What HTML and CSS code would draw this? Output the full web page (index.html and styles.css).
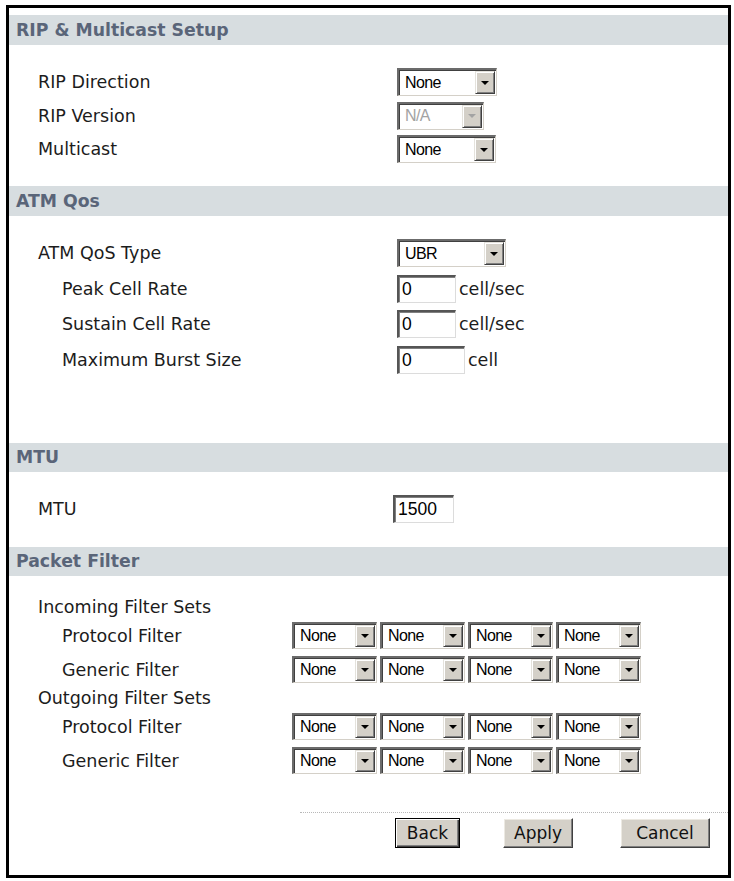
FILE: index.html
```html
<!DOCTYPE html>
<html lang="en">
<head>
<meta charset="utf-8">
<title>WAN Advanced Setup</title>
<link rel="stylesheet" href="styles.css">
</head>
<body>
<div class="frame">

  <div class="sec-head">RIP &amp; Multicast Setup</div>
  <div class="sec-body sb-rip">
    <div class="row r-rip">
      <span class="lbl l1">RIP Direction</span>
      <div class="sel w100"><span class="sel-text">None</span><span class="sel-btn"><i class="tri"></i></span></div>
    </div>
    <div class="row r-rip">
      <span class="lbl l1">RIP Version</span>
      <div class="sel w87 disabled"><span class="sel-text">N/A</span><span class="sel-btn"><i class="tri"></i></span></div>
    </div>
    <div class="row r-rip">
      <span class="lbl l1">Multicast</span>
      <div class="sel w99"><span class="sel-text">None</span><span class="sel-btn"><i class="tri"></i></span></div>
    </div>
  </div>

  <div class="sec-head">ATM Qos</div>
  <div class="sec-body sb-atm">
    <div class="row r-atm">
      <span class="lbl l1">ATM QoS Type</span>
      <div class="sel w109"><span class="sel-text">UBR</span><span class="sel-btn"><i class="tri"></i></span></div>
    </div>
    <div class="row r-atm">
      <span class="lbl l2">Peak Cell Rate</span>
      <div class="ctl"><input class="inp w59" type="text" value="0"><span class="unit">cell/sec</span></div>
    </div>
    <div class="row r-atm">
      <span class="lbl l2">Sustain Cell Rate</span>
      <div class="ctl"><input class="inp w59" type="text" value="0"><span class="unit">cell/sec</span></div>
    </div>
    <div class="row r-atm">
      <span class="lbl l2">Maximum Burst Size</span>
      <div class="ctl"><input class="inp w68" type="text" value="0"><span class="unit">cell</span></div>
    </div>
  </div>

  <div class="sec-head sh-short">MTU</div>
  <div class="sec-body sb-mtu">
    <div class="row r-mtu">
      <span class="lbl l1">MTU</span>
      <div class="ctl ctl-mtu"><input class="inp w61" type="text" value="1500"></div>
    </div>
  </div>

  <div class="sec-head sh-short">Packet Filter</div>
  <div class="sec-body sb-pf">
    <div class="trow"><span class="lbl l1">Incoming Filter Sets</span></div>
    <div class="frow">
      <span class="lbl l2">Protocol Filter</span>
      <div class="fgroup">
        <div class="sel w85"><span class="sel-text">None</span><span class="sel-btn"><i class="tri"></i></span></div>
        <div class="sel w85"><span class="sel-text">None</span><span class="sel-btn"><i class="tri"></i></span></div>
        <div class="sel w85"><span class="sel-text">None</span><span class="sel-btn"><i class="tri"></i></span></div>
        <div class="sel w85"><span class="sel-text">None</span><span class="sel-btn"><i class="tri"></i></span></div>
      </div>
    </div>
    <div class="frow">
      <span class="lbl l2">Generic Filter</span>
      <div class="fgroup">
        <div class="sel w85"><span class="sel-text">None</span><span class="sel-btn"><i class="tri"></i></span></div>
        <div class="sel w85"><span class="sel-text">None</span><span class="sel-btn"><i class="tri"></i></span></div>
        <div class="sel w85"><span class="sel-text">None</span><span class="sel-btn"><i class="tri"></i></span></div>
        <div class="sel w85"><span class="sel-text">None</span><span class="sel-btn"><i class="tri"></i></span></div>
      </div>
    </div>
    <div class="trow"><span class="lbl l1">Outgoing Filter Sets</span></div>
    <div class="frow">
      <span class="lbl l2">Protocol Filter</span>
      <div class="fgroup">
        <div class="sel w85"><span class="sel-text">None</span><span class="sel-btn"><i class="tri"></i></span></div>
        <div class="sel w85"><span class="sel-text">None</span><span class="sel-btn"><i class="tri"></i></span></div>
        <div class="sel w85"><span class="sel-text">None</span><span class="sel-btn"><i class="tri"></i></span></div>
        <div class="sel w85"><span class="sel-text">None</span><span class="sel-btn"><i class="tri"></i></span></div>
      </div>
    </div>
    <div class="frow">
      <span class="lbl l2">Generic Filter</span>
      <div class="fgroup">
        <div class="sel w85"><span class="sel-text">None</span><span class="sel-btn"><i class="tri"></i></span></div>
        <div class="sel w85"><span class="sel-text">None</span><span class="sel-btn"><i class="tri"></i></span></div>
        <div class="sel w85"><span class="sel-text">None</span><span class="sel-btn"><i class="tri"></i></span></div>
        <div class="sel w85"><span class="sel-text">None</span><span class="sel-btn"><i class="tri"></i></span></div>
      </div>
    </div>
  </div>

  <div class="actions">
    <button class="btn btn-back default" type="button">Back</button>
    <button class="btn btn-apply" type="button">Apply</button>
    <button class="btn btn-cancel" type="button">Cancel</button>
  </div>

</div>
</body>
</html>
```
FILE: styles.css
```css
html, body {
  margin: 0;
  padding: 0;
  background: #ffffff;
}

body {
  font-family: "DejaVu Sans", Verdana, sans-serif;
  color: #1c1c1c;
}

.frame {
  box-sizing: border-box;
  width: 725px;
  height: 873px;
  margin: 5px 0 0 6px;
  border: 3px solid #000;
  padding-top: 7px;
  background: #fff;
}

/* Section header bars */
.sec-head {
  height: 30px;
  background: #d7dde0;
  color: #5a6579;
  font-weight: bold;
  font-size: 17.3px;
  line-height: 30px;
  padding-left: 7px;
  white-space: nowrap;
}
.sh-short {
  height: 29px;
  line-height: 29px;
}

/* Section bodies */
.sb-rip { padding: 20.25px 0; }
.sb-atm { padding: 19.25px 0 65.75px; }
.sb-mtu { padding: 19.5px 0 20.5px; }
.sb-pf  { padding: 19.5px 0 0; }

.row {
  display: grid;
  grid-template-columns: 388px auto;
  align-items: center;
}
.r-rip { height: 33.5px; }
.r-atm { height: 35.5px; }
.r-mtu { height: 35px; }

.trow {
  height: 23px;
  display: flex;
  align-items: center;
}
.frow {
  height: 34px;
  display: grid;
  grid-template-columns: 283px auto;
  align-items: center;
}

.lbl {
  font-size: 17.5px;
  white-space: nowrap;
  color: #1c1c1c;
}
.l1 { padding-left: 29px; }
.l2 { padding-left: 53px; }

.ctl {
  display: flex;
  align-items: center;
}
.ctl-mtu { margin-left: -4px; }

.unit {
  font-size: 17.5px;
  margin-left: 3px;
  color: #1c1c1c;
}

.fgroup {
  display: flex;
  gap: 3px;
}

/* Win-classic style select */
.sel {
  box-sizing: border-box;
  height: 28px;
  display: flex;
  align-items: stretch;
  background: #fff;
  border-style: solid;
  border-width: 2px 1px 1px 2px;
  border-color: #6b6b6b #d4d0c8 #d4d0c8 #6b6b6b;
  box-shadow: inset 1px 1px 0 #404040;
  padding: 1px;
}
.frow .sel { height: 27px; }

.sel-text {
  flex: 1;
  display: flex;
  align-items: center;
  padding-left: 5px;
  font-family: "Liberation Sans", Arial, sans-serif;
  font-size: 16px;
  letter-spacing: -0.6px;
  color: #000;
  overflow: hidden;
}
.sel-btn {
  box-sizing: border-box;
  width: 20px;
  background: #d4d0c8;
  border-style: solid;
  border-width: 1px;
  border-color: #e4e2dc #404040 #404040 #e4e2dc;
  box-shadow: inset 1px 1px 0 #ffffff, inset -1px -1px 0 #808080;
  display: flex;
  align-items: center;
  justify-content: center;
}
.tri {
  display: block;
  width: 0;
  height: 0;
  border-left: 4px solid transparent;
  border-right: 4px solid transparent;
  border-top: 4px solid #000;
}
.disabled .sel-text { color: #a3a3a3; }
.disabled .tri { border-top-color: #a3a3a3; }

.w100 { width: 100px; }
.w87  { width: 87px; }
.w99  { width: 99px; }
.w109 { width: 109px; }
.w85  { width: 85px; }

/* Text inputs */
.inp {
  box-sizing: border-box;
  height: 28px;
  margin: 0;
  padding: 0 0 0 3px;
  border-style: solid;
  border-width: 2px 1px 1px 2px;
  border-color: #555 #dcdcdc #dcdcdc #555;
  box-shadow: inset 1px 1px 0 #808080;
  background: #fff;
  font-family: "Liberation Sans", Arial, sans-serif;
  font-size: 17.5px;
  color: #000;
  outline: none;
}
.w59 { width: 59px; }
.w68 { width: 68px; }
.w61 { width: 61px; }

/* Action buttons */
.actions {
  margin: 34.5px 0 0 291px;
  border-top: 1px dotted #b8b8b8;
  padding-top: 5px;
  display: flex;
  align-items: center;
}
.btn {
  box-sizing: border-box;
  height: 30px;
  margin: 0;
  padding: 0;
  background: #d4d0c8;
  border-style: solid;
  border-width: 1px;
  border-color: #ffffff #404040 #404040 #ffffff;
  box-shadow: inset -1px -1px 0 #808080, inset 1px 1px 0 #ece9e2;
  font-family: "DejaVu Sans", Verdana, sans-serif;
  font-size: 17px;
  color: #111;
}
.btn.default {
  border: 1px solid #000;
  box-shadow: inset 1px 1px 0 #ffffff, inset -1px -1px 0 #404040, inset -2px -2px 0 #808080;
}
.btn-back { width: 65px; margin-left: 95px; }
.btn-apply { width: 70px; margin-left: 43px; }
.btn-cancel { width: 90px; margin-left: 47px; }
```
